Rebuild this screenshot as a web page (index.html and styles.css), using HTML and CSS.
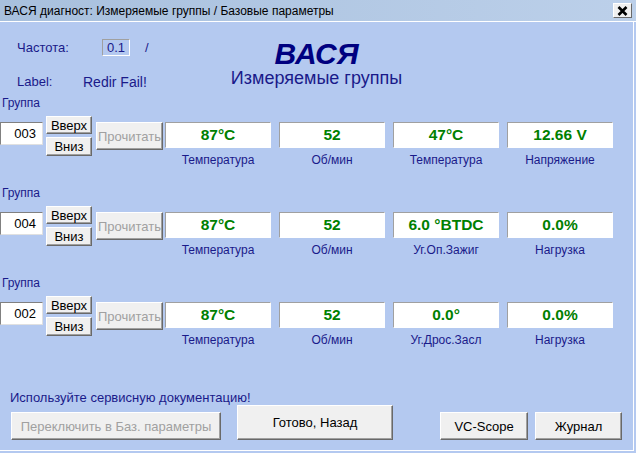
FILE: index.html
```html
<!DOCTYPE html>
<html lang="ru">
<head>
    <meta charset="UTF-8">
    <title>ВАСЯ диагност</title>
    <link rel="stylesheet" href="styles.css">
</head>
<body>
    <div class="window">
        <div class="titlebar">
            <span class="title">ВАСЯ диагност: Измеряемые группы / Базовые параметры</span>
            <button class="close">
                <svg width="11" height="10" viewBox="0 0 11 10">
                    <path d="M1.5 1 L9.5 9 M9.5 1 L1.5 9" stroke="#000" stroke-width="2.6" fill="none"/>
                </svg>
            </button>
        </div>

        <div class="client">
            <div class="header">
                <div class="params">
                    <div class="param-row">
                        <span class="param-name freq-name">Частота:</span>
                        <span class="freq">0.1</span>
                        <span class="slash">/</span>
                    </div>
                    <div class="param-row label-row">
                        <span class="param-name">Label:</span>
                        <span class="label-value">Redir Fail!</span>
                    </div>
                </div>
                <div class="brand">
                    <div class="brand-name">ВАСЯ</div>
                    <div class="brand-sub">Измеряемые группы</div>
                </div>
            </div>

            <!-- группа 003 -->
            <div class="group">
                <div class="group-title">Группа</div>
                <div class="group-row">
                    <div class="group-num">003</div>
                    <div class="updown">
                        <button class="btn up">Вверх</button>
                        <button class="btn down">Вниз</button>
                    </div>
                    <button class="btn read" disabled>Прочитать</button>
                    <div class="values">
                        <div class="cell"><div class="value">87°C</div><div class="caption">Температура</div></div>
                        <div class="cell"><div class="value">52</div><div class="caption">Об/мин</div></div>
                        <div class="cell"><div class="value">47°C</div><div class="caption">Температура</div></div>
                        <div class="cell"><div class="value">12.66 V</div><div class="caption">Напряжение</div></div>
                    </div>
                </div>
            </div>

            <!-- группа 004 -->
            <div class="group">
                <div class="group-title">Группа</div>
                <div class="group-row">
                    <div class="group-num">004</div>
                    <div class="updown">
                        <button class="btn up">Вверх</button>
                        <button class="btn down">Вниз</button>
                    </div>
                    <button class="btn read" disabled>Прочитать</button>
                    <div class="values">
                        <div class="cell"><div class="value">87°C</div><div class="caption">Температура</div></div>
                        <div class="cell"><div class="value">52</div><div class="caption">Об/мин</div></div>
                        <div class="cell"><div class="value">6.0 °BTDC</div><div class="caption">Уг.Оп.Зажиг</div></div>
                        <div class="cell"><div class="value">0.0%</div><div class="caption">Нагрузка</div></div>
                    </div>
                </div>
            </div>

            <!-- группа 002 -->
            <div class="group">
                <div class="group-title">Группа</div>
                <div class="group-row">
                    <div class="group-num">002</div>
                    <div class="updown">
                        <button class="btn up">Вверх</button>
                        <button class="btn down">Вниз</button>
                    </div>
                    <button class="btn read" disabled>Прочитать</button>
                    <div class="values">
                        <div class="cell"><div class="value">87°C</div><div class="caption">Температура</div></div>
                        <div class="cell"><div class="value">52</div><div class="caption">Об/мин</div></div>
                        <div class="cell"><div class="value">0.0°</div><div class="caption">Уг.Дрос.Засл</div></div>
                        <div class="cell"><div class="value">0.0%</div><div class="caption">Нагрузка</div></div>
                    </div>
                </div>
            </div>

            <div class="footer">
                <div class="hint">Используйте сервисную документацию!</div>
                <div class="footer-row">
                    <button class="btn switch" disabled>Переключить в Баз. параметры</button>
                    <button class="btn done">Готово, Назад</button>
                    <button class="btn scope">VC-Scope</button>
                    <button class="btn log">Журнал</button>
                </div>
            </div>
        </div>
    </div>
</body>
</html>
```

FILE: styles.css
```css
* {
    box-sizing: border-box;
}
body {
    margin: 0;
    font-family: "Liberation Sans", Arial, sans-serif;
    background-color: #b4c9f0;
}
.window {
    width: 636px;
    height: 453px;
    overflow: hidden;
    background-color: #b4c9f0;
}
.titlebar {
    height: 22px;
    display: flex;
    align-items: center;
    padding-left: 4px;
    padding-right: 4px;
    border-bottom: 1px solid #ffffff;
    background: linear-gradient(to right, #a8c0dd, #bcd0ea);
}
.title {
    font-size: 12px;
    color: #000;
}
.close {
    margin-left: auto;
    width: 19px;
    height: 15px;
    padding: 0;
    display: flex;
    align-items: center;
    justify-content: center;
    background-color: #f0f0f0;
    border: 1px solid;
    border-color: #ffffff #696969 #696969 #ffffff;
}
.client {
    width: 634px;
    height: 429px;
    border-right: 1px solid #ffffff;
    border-bottom: 1px solid #ffffff;
    color: #1a1a8a;
}

/* шапка */
.header {
    height: 74px;
    display: grid;
}
.params, .brand {
    grid-area: 1 / 1;
}
.params {
    padding-left: 17px;
    padding-top: 17px;
}
.param-row {
    display: flex;
    align-items: center;
    height: 17px;
    font-size: 13px;
}
.label-row {
    margin-top: 17px;
}
.param-name {
    width: 66px;
}
.freq-name {
    width: 85px;
}
.freq {
    width: 28px;
    height: 17px;
    line-height: 15px;
    text-align: center;
    border: 1px solid;
    border-color: #a0a0a0 #ffffff #ffffff #a0a0a0;
}
.slash {
    margin-left: 15px;
}
.label-value {
    font-size: 14px;
}
.brand {
    padding-top: 17px;
    text-align: center;
    color: #000080;
}
.brand-name {
    font-size: 30px;
    line-height: 30px;
    font-weight: bold;
    font-style: italic;
}
.brand-sub {
    font-size: 18px;
    line-height: 18px;
    color: #1a1a8a;
}

/* группы */
.group {
    height: 90px;
}
.group-title {
    font-size: 12px;
    line-height: 14px;
    padding-left: 2px;
}
.group-row {
    display: flex;
    align-items: flex-start;
    margin-top: 6px;
}
.group-num {
    margin-top: 6px;
    width: 43px;
    height: 23px;
    padding-right: 6px;
    font-size: 13px;
    line-height: 21px;
    text-align: right;
    color: #000;
    background-color: #ffffff;
    border: 1px solid;
    border-color: #808080 #e0e0e0 #e0e0e0 #808080;
}
.btn {
    font-family: "Liberation Sans", Arial, sans-serif;
    font-size: 13px;
    color: #000;
    padding: 0;
    background-color: #f0f0f0;
    border: 1px solid;
    border-color: #ffffff #696969 #696969 #ffffff;
    box-shadow: inset -1px -1px #a0a0a0;
}
.btn:disabled {
    color: #a0a0a0;
}
.updown {
    margin-left: 3px;
    width: 46px;
    display: flex;
    flex-direction: column;
    gap: 3px;
}
.up {
    height: 18px;
}
.down {
    height: 19px;
}
.read {
    margin-left: 4px;
    margin-top: 6px;
    width: 67px;
    height: 28px;
}
.values {
    display: flex;
    gap: 8px;
    margin-left: 2px;
    margin-top: 6px;
}
.cell {
    width: 106px;
}
.value {
    height: 26px;
    line-height: 24px;
    text-align: center;
    font-size: 15.5px;
    font-weight: bold;
    color: #008000;
    background-color: #ffffff;
    border: 1px solid;
    border-color: #a0a0a0 #ffffff #ffffff #a0a0a0;
}
.caption {
    margin-top: 5px;
    font-size: 12px;
    line-height: 14px;
    text-align: center;
}

/* низ окна */
.footer {
    padding-top: 25px;
}
.hint {
    font-size: 13px;
    line-height: 14px;
    padding-left: 10px;
}
.footer-row {
    display: flex;
    align-items: flex-end;
    height: 35px;
}
.switch {
    margin-left: 11px;
    width: 210px;
    height: 28px;
}
.done {
    margin-left: 16px;
    width: 156px;
    height: 35px;
}
.scope {
    margin-left: 47px;
    width: 88px;
    height: 28px;
}
.log {
    margin-left: 7px;
    width: 87px;
    height: 28px;
}
```
